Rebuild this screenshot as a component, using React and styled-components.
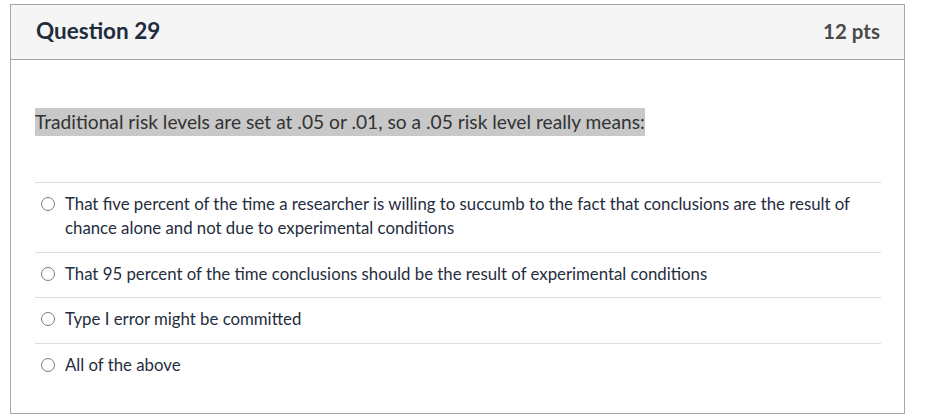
import React from "react";
import styled, { createGlobalStyle } from "styled-components";

const GlobalStyle = createGlobalStyle`
  html, body {
    margin: 0;
    padding: 0;
    background: #ffffff;
  }
  body {
    font-family: Lato, "Liberation Sans", sans-serif;
    color: #2d3b45;
  }
`;

const answers = [
  "That five percent of the time a researcher is willing to succumb to the fact that conclusions are the result of chance alone and not due to experimental conditions",
  "That 95 percent of the time conclusions should be the result of experimental conditions",
  "Type I error might be committed",
  "All of the above",
];

const App = () => {
  return (
    <S.Page>
      <GlobalStyle />
      <S.Card>
        <S.Header>
          <S.Title>Question 29</S.Title>
          <S.Points>12 pts</S.Points>
        </S.Header>
        <S.Body>
          <S.QuestionText>
            <S.Highlight>
              Traditional risk levels are set at .05 or .01, so a .05 risk level really means:
            </S.Highlight>
          </S.QuestionText>
          <S.Answers>
            {answers.map((a) => (
              <S.Answer key={a}>
                <S.Radio />
                <S.AnswerLabel>{a}</S.AnswerLabel>
              </S.Answer>
            ))}
          </S.Answers>
        </S.Body>
      </S.Card>
    </S.Page>
  );
};

const S = {
  Page: styled.div`
    padding: 4px 0 0 10px;
    width: 928px;
    box-sizing: border-box;
  `,
  Card: styled.div`
    width: 895px;
    box-sizing: border-box;
    border: 1px solid #a8a8a8;
    background: #ffffff;
  `,
  Header: styled.div`
    display: flex;
    justify-content: space-between;
    align-items: center;
    height: 55px;
    padding: 0 24px 3px 25px;
    box-sizing: border-box;
    background: #f5f5f5;
    border-bottom: 1px solid #a8a8a8;
  `,
  Title: styled.div`
    font-size: 22.5px;
    font-weight: 700;
    color: #1f2d3d;
  `,
  Points: styled.div`
    font-size: 20.5px;
    font-weight: 700;
    color: #4a4a4a;
  `,
  Body: styled.div`
    padding: 48px 23px 25px 24px;
  `,
  QuestionText: styled.div`
    font-size: 19.2px;
    line-height: 28px;
    color: #333333;
  `,
  Highlight: styled.span`
    display: inline-block;
    background: #c8c8c8;
  `,
  Answers: styled.div`
    margin-top: 46px;
  `,
  Answer: styled.label`
    display: flex;
    align-items: flex-start;
    gap: 10px;
    padding: 9px 0 11.5px 6px;
    border-top: 1px solid #dddddd;
    font-size: 16.8px;
    line-height: 24px;
    color: #1f2d3d;
  `,
  Radio: styled.span`
    flex: none;
    width: 12px;
    height: 12px;
    margin-top: 5px;
    border: 1px solid #7a7a7a;
    border-radius: 50%;
    background: #ffffff;
  `,
  AnswerLabel: styled.span`
    flex: 1;
    padding-right: 20px;
  `,
};

export default App;
